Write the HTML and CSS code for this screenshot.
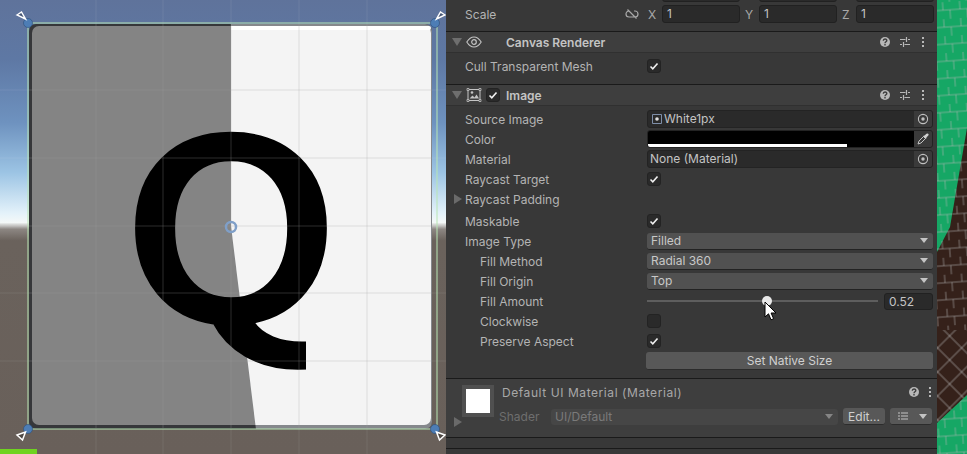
FILE: index.html
```html
<!DOCTYPE html>
<html lang="en">
<head>
    <meta charset="UTF-8">
    <title>Image inspector</title>
    <link rel="stylesheet" href="styles.css">
</head>
<body>

<svg width="0" height="0" class="defs">
    <symbol id="i-check" viewBox="0 0 14 14"><path d="M3.500 7.500l2.300 2.300 4.700-5.300" fill="none" stroke="#f0f0f0" stroke-width="1.600"/></symbol>
    <symbol id="i-help" viewBox="0 0 12 12"><circle cx="6" cy="6" r="5" fill="#b8b8b8"/><path d="M4.300 4.700c0-2.200 3.500-2.200 3.500-.2 0 1.300-1.800 1.300-1.800 2.700" fill="none" stroke="#3e3e3e" stroke-width="1.400"/><rect x="5.300" y="8" width="1.400" height="1.500" fill="#3e3e3e"/></symbol>
    <symbol id="i-sliders" viewBox="0 0 12 12"><path d="M1 3.500h5.500M9 3.500h2M7.500 1v5M1 8.500h2M5.500 8.500h5.500M4.500 6v5" fill="none" stroke="#b8b8b8" stroke-width="1.200"/></symbol>
    <symbol id="i-dots" viewBox="0 0 4 12"><path d="M1 1h2v2H1zM1 5h2v2H1zM1 9h2v2H1z" fill="#b8b8b8"/></symbol>
    <symbol id="i-target" viewBox="0 0 12 12"><circle cx="6" cy="6" r="4.600" fill="none" stroke="#c0c0c0" stroke-width="1.100"/><circle cx="6" cy="6" r="1.700" fill="#c0c0c0"/></symbol>
    <symbol id="i-caret" viewBox="0 0 8 5"><path d="M0 0h8L4 5z" fill="#c4c4c4"/></symbol>
</svg>

<div class="window">
    <div class="scene">
        <svg class="scene-art" width="446" height="454" viewBox="0 0 446 454">
            <defs>
                <linearGradient id="sky" x1="0" y1="0" x2="0" y2="1">
                    <stop offset="0" stop-color="#5f739b"/>
                    <stop offset="0.13" stop-color="#5e78a4"/>
                    <stop offset="0.27" stop-color="#6e92bf"/>
                    <stop offset="0.38" stop-color="#9cc4e4"/>
                    <stop offset="0.47" stop-color="#e4f2fa"/>
                    <stop offset="0.49" stop-color="#f4f8f8"/>
                    <stop offset="0.505" stop-color="#8c8682"/>
                    <stop offset="0.53" stop-color="#6a625c"/>
                    <stop offset="1" stop-color="#69605a"/>
                </linearGradient>
                <clipPath id="wedge"><path d="M231 226V0H446V454H259z"/></clipPath>
                <clipPath id="tail-cut">
                    <rect x="0" y="0" width="446" height="330"/>
                    <rect x="0" y="300" width="306" height="100" rx="6"/>
                </clipPath>
            </defs>
            <rect width="446" height="454" fill="url(#sky)"/>
            <rect y="449" width="37" height="5" fill="#6fd320"/>
            <path d="M96 0V454M163 0V454M231 0V454M299 0V454M367 0V454M0 90H446M0 158H446M0 226H446M0 293H446M0 361H446" stroke="#fff" stroke-opacity=".08"/>

            <rect x="29" y="24" width="403" height="405" rx="7" fill="#36373a"/>
            <rect x="32" y="26" width="399" height="399" rx="7" fill="#848484"/>
            <g clip-path="url(#wedge)">
                <rect x="29" y="24" width="403" height="405" rx="7" fill="#85888c"/>
                <rect x="32" y="26" width="399" height="399" rx="7" fill="#f4f4f4"/>
                <rect x="32" y="26" width="399" height="4" rx="2" fill="#fff"/>
            </g>
            <g clip-path="url(#tail-cut)">
                <text class="q-glyph" transform="translate(231 320) scale(1.02 .87)" text-anchor="middle">Q</text>
            </g>
            <path d="M96 24V428M163 24V428M231 24V428M299 24V428M367 24V428M29 90H432M29 158H432M29 226H432M29 293H432M29 361H432" stroke="#a0a0a0" stroke-opacity=".28"/>

            <rect x="28" y="23" width="409" height="406" fill="none" stroke="#b8e6b4"/>
            <circle cx="231" cy="227" r="5" fill="none" stroke="#7f9fc8" stroke-width="2.500"/>

            <g fill="#4d7db5" stroke="#2c4f78" stroke-width=".6">
                <circle cx="28" cy="23" r="4.500"/><circle cx="435" cy="23" r="4.500"/>
                <circle cx="28" cy="429" r="4.500"/><circle cx="435" cy="429" r="4.500"/>
            </g>
            <g fill="#000" fill-opacity=".25" stroke="#fff" stroke-width="1.500">
                <path d="M17 15l4.500-3 4 7z"/><path d="M445 15l-4.500-3-4 7z"/>
                <path d="M17 435l8.500-3-3 8z"/><path d="M445 435l-8.500-3 3 8z"/>
            </g>
        </svg>
    </div>

    <div class="inspector">
        <div class="clip-row">
            <span class="input"></span><span class="input"></span><span class="input"></span>
        </div>
        <div class="row scale-row">
            <span class="label">Scale</span>
            <div class="xyz">
                <svg class="link-icon" width="14" height="12" viewBox="0 0 14 12"><path d="M4.500 3H4a3 3 0 000 6h6a3 3 0 000-6H9M2.500 1.500l9 9" fill="none" stroke="#a8a8a8" stroke-width="1.200"/></svg>
                <span class="axis">X</span><span class="input">1</span>
                <span class="axis">Y</span><span class="input">1</span>
                <span class="axis">Z</span><span class="input">1</span>
            </div>
        </div>

        <div class="comp-head">
            <span class="fold"></span>
            <svg class="comp-icon" width="16" height="12" viewBox="0 0 16 12"><path d="M.8 6C3 2.500 5.500 1 8 1s5 1.500 7.200 5C13 9.500 10.500 11 8 11S3 9.500.8 6z" fill="none" stroke="#c4c4c4" stroke-width="1.100"/><circle cx="8" cy="6" r="2.300" fill="none" stroke="#c4c4c4" stroke-width="1.200"/></svg>
            <span class="comp-box"></span>
            <span class="comp-title">Canvas Renderer</span>
            <svg class="tool" width="12" height="12"><use href="#i-help"/></svg>
            <svg class="tool" width="12" height="12"><use href="#i-sliders"/></svg>
            <svg class="tool dots" width="4" height="12"><use href="#i-dots"/></svg>
        </div>
        <div class="row first">
            <span class="label">Cull Transparent Mesh</span>
            <span class="check"><svg width="14" height="14"><use href="#i-check"/></svg></span>
        </div>

        <div class="comp-head second">
            <span class="fold"></span>
            <svg class="comp-icon" width="16" height="14" viewBox="0 0 16 14"><path d="M2 1.500h12v11H2z" fill="none" stroke="#c4c4c4"/><path d="M3.500 10.500l3-3 2 2 2-3 2.500 4z" fill="#c4c4c4"/><circle cx="6" cy="4.500" r="1.300" fill="#c4c4c4"/><path d="M1 .5h2v2H1zM13 .5h2v2h-2zM1 11.500h2v2H1zM13 11.500h2v2h-2z" fill="#383838" stroke="#c4c4c4" stroke-width=".8"/></svg>
            <span class="check comp-box"><svg width="14" height="14"><use href="#i-check"/></svg></span>
            <span class="comp-title">Image</span>
            <svg class="tool" width="12" height="12"><use href="#i-help"/></svg>
            <svg class="tool" width="12" height="12"><use href="#i-sliders"/></svg>
            <svg class="tool dots" width="4" height="12"><use href="#i-dots"/></svg>
        </div>
        <div class="row first">
            <span class="label">Source Image</span>
            <div class="field">
                <svg class="thumb" width="12" height="12" viewBox="0 0 12 12"><path d="M1.500 1.500h9v9h-9z" fill="none" stroke="#7e8ea8"/><circle cx="6" cy="6" r="1.800" fill="#e0e0e0"/></svg>
                <span class="field-text">White1px</span>
                <span class="picker"><svg width="12" height="12"><use href="#i-target"/></svg></span>
            </div>
        </div>
        <div class="row">
            <span class="label">Color</span>
            <div class="color-field">
                <div class="swatch"><div class="alpha" style="width: 74.900%"></div></div>
                <span class="picker"><svg width="12" height="12" viewBox="0 0 12 12"><path d="M1 11l1-3 4.500-4.500 2 2L4 10z" fill="none" stroke="#c4c4c4"/><path d="M6 3l1.500-.5L9.500.8a1 1 0 011.700 1.700L9.500 4.500 9 6z" fill="#d0d0d0"/></svg></span>
            </div>
        </div>
        <div class="row">
            <span class="label">Material</span>
            <div class="field">
                <span class="field-text plain">None (Material)</span>
                <span class="picker"><svg width="12" height="12"><use href="#i-target"/></svg></span>
            </div>
        </div>
        <div class="row">
            <span class="label">Raycast Target</span>
            <span class="check"><svg width="14" height="14"><use href="#i-check"/></svg></span>
        </div>
        <div class="row foldout-row">
            <span class="label"><span class="fold-side"></span>Raycast Padding</span>
        </div>
        <div class="row after-fold">
            <span class="label">Maskable</span>
            <span class="check"><svg width="14" height="14"><use href="#i-check"/></svg></span>
        </div>
        <div class="row">
            <span class="label">Image Type</span>
            <div class="select">Filled<svg width="8" height="5"><use href="#i-caret"/></svg></div>
        </div>
        <div class="row sub">
            <span class="label">Fill Method</span>
            <div class="select">Radial 360<svg width="8" height="5"><use href="#i-caret"/></svg></div>
        </div>
        <div class="row sub">
            <span class="label">Fill Origin</span>
            <div class="select">Top<svg width="8" height="5"><use href="#i-caret"/></svg></div>
        </div>
        <div class="row sub">
            <span class="label">Fill Amount</span>
            <div class="slider">
                <div class="track">
                    <span class="knob" style="left: 52%"></span>
                    <svg class="cursor" width="13" height="20" viewBox="0 0 13 20"><path d="M1 1v15l3.500-3.200 2.500 6 2.600-1.100-2.500-5.700H12z" fill="#fff" stroke="#000"/></svg>
                </div>
                <span class="input amount">0.52</span>
            </div>
        </div>
        <div class="row sub">
            <span class="label">Clockwise</span>
            <span class="check"></span>
        </div>
        <div class="row sub">
            <span class="label">Preserve Aspect</span>
            <span class="check"><svg width="14" height="14"><use href="#i-check"/></svg></span>
        </div>
        <div class="row native-row">
            <span></span>
            <div class="btn native">Set Native Size</div>
        </div>

        <div class="mat">
            <span class="fold-side mat-fold"></span>
            <div class="mat-swatch"><span></span></div>
            <div class="mat-body">
                <div class="mat-title">
                    <span class="mat-name">Default UI Material (Material)</span>
                    <svg class="tool" width="12" height="12"><use href="#i-help"/></svg>
                    <svg class="tool dots" width="4" height="12"><use href="#i-dots"/></svg>
                </div>
                <div class="mat-shader">
                    <span class="shader-label">Shader</span>
                    <div class="select shader-select">UI/Default<svg width="8" height="5"><use href="#i-caret"/></svg></div>
                    <div class="btn edit">Edit...</div>
                    <div class="btn list">
                        <svg width="10" height="8" viewBox="0 0 10 8"><path d="M3 1h7M3 4h7M3 7h7M0 1h2M0 4h2M0 7h2" stroke="#c4c4c4"/></svg>
                        <svg width="8" height="5"><use href="#i-caret"/></svg>
                    </div>
                </div>
            </div>
        </div>
        <div class="end-strip"></div>
    </div>

    <div class="side">
        <svg width="30" height="454" viewBox="937 0 30 454">
            <defs>
                <pattern id="mesh" width="17" height="17" patternUnits="userSpaceOnUse" patternTransform="rotate(-4)">
                    <path d="M0 8H17M5 0V8M12 8V17" stroke="#b4b4b4" stroke-opacity=".55" fill="none"/>
                </pattern>
                <pattern id="mesh-cross" width="17" height="17" patternUnits="userSpaceOnUse" patternTransform="rotate(45)">
                    <path d="M0 8H17M8 0V17" stroke="#b4b4b4" stroke-opacity=".6" fill="none"/>
                </pattern>
            </defs>
            <rect x="937" width="30" height="454" fill="#35211a"/>
            <rect x="937" y="230" width="30" height="100" fill="url(#mesh)"/>
            <rect x="937" y="330" width="30" height="100" fill="url(#mesh-cross)"/>
            <path d="M937 0H967V128L950 227 937 252z" fill="#16a765"/>
            <path d="M937 423L967 395V454H937z" fill="#16a765"/>
            <path d="M937 0H967V128L950 227 937 252z" fill="url(#mesh)"/>
            <path d="M937 423L967 395V454H937z" fill="url(#mesh)"/>
            <path d="M963 150L967 128V230H950z" fill="url(#mesh)"/>
        </svg>
    </div>
</div>

</body>
</html>
```

FILE: styles.css
```css
html, body {
    margin: 0;
    padding: 0;
    overflow: hidden;
}
body {
    font-family: Inter, "Liberation Sans", sans-serif;
    font-size: 12px;
    color: #c4c4c4;
    background: #383838;
}
.defs {
    position: absolute;
}
.window {
    display: flex;
    width: 967px;
    height: 454px;
    overflow: hidden;
}
.scene {
    flex: 0 0 446px;
}
.scene-art, .side svg {
    display: block;
}
.q-glyph {
    font-family: "Noto Sans CJK JP", sans-serif;
    font-weight: 500;
    font-size: 285px;
    fill: #000;
    stroke: #000;
    stroke-width: 5px;
    stroke-linejoin: round;
}

/* inspector */
.inspector {
    flex: 0 0 491px;
    background: #383838;
    overflow: hidden;
}
.clip-row {
    display: flex;
    height: 4px;
    padding-left: 216px;
    padding-right: 4px;
    gap: 19px;
    overflow: hidden;
    align-items: flex-end;
}
.clip-row .input {
    flex: 0 0 78px;
    margin-bottom: 2px;
}
.row {
    display: grid;
    grid-template-columns: 182px 1fr;
    align-items: center;
    height: 20px;
    padding: 0 4px 0 19px;
}
.row.first {
    margin-top: 3px;
}
.row.sub .label {
    padding-left: 15px;
}
.row.after-fold {
    margin-top: 2px;
}
.label {
    color: #b4b4b4;
    white-space: nowrap;
}
.foldout-row .label {
    position: relative;
}
.fold-side {
    position: absolute;
    left: -11px;
    top: 2px;
    border-left: 8px solid #6a6a6a;
    border-top: 5px solid transparent;
    border-bottom: 5px solid transparent;
}
.scale-row {
    margin-bottom: 7px;
}
.xyz {
    display: flex;
    align-items: center;
    margin-left: -22px;
}
.link-icon {
    margin-right: 9px;
}
.axis {
    width: 14px;
    margin-left: 5px;
    color: #a8a8a8;
}
.axis:first-of-type {
    margin-left: 0;
}
.input {
    display: block;
    box-sizing: border-box;
    flex: 0 0 78px;
    height: 18px;
    line-height: 16px;
    padding: 0 4px;
    background: #2a2a2a;
    border: 1px solid #212121;
    border-radius: 3px;
    color: #c4c4c4;
}

/* component header */
.comp-head {
    display: flex;
    align-items: center;
    box-sizing: content-box;
    height: 20px;
    background: #3e3e3e;
    border-top: 1px solid #1a1a1a;
    border-bottom: 1px solid #303030;
}
.comp-head.second {
    margin-top: 8px;
}
.fold {
    margin-left: 6px;
    width: 0;
    border-top: 8px solid #6e6e6e;
    border-left: 5px solid transparent;
    border-right: 5px solid transparent;
}
.comp-icon {
    margin-left: 4px;
}
.comp-box {
    flex: 0 0 14px;
    margin-left: 4px;
    margin-right: 0;
}
.comp-title {
    flex: 1;
    margin-left: 6px;
    font-weight: 600;
    color: #c4c4c4;
}
.tool {
    margin-right: 8px;
}
.tool.dots {
    margin-left: 2px;
    margin-right: 12px;
}

/* values */
.check {
    display: block;
    box-sizing: border-box;
    width: 14px;
    height: 14px;
    background: #2a2a2a;
    border: 1px solid #232323;
    border-radius: 3px;
}
.check svg {
    display: block;
    margin: -1px;
}
.field, .color-field {
    display: flex;
    height: 18px;
    box-sizing: border-box;
    align-items: stretch;
    background: #2a2a2a;
    border: 1px solid #232323;
    border-radius: 3px;
    overflow: hidden;
}
.field-text {
    flex: 1;
    line-height: 16px;
    color: #c4c4c4;
}
.field-text.plain {
    padding-left: 2px;
}
.thumb {
    margin: 2px 1px 0 3px;
}
.picker {
    display: flex;
    align-items: center;
    justify-content: center;
    flex: 0 0 18px;
    background: #3a3a3a;
}
.swatch {
    flex: 1;
    display: flex;
    align-items: flex-end;
    background: #000;
}
.alpha {
    height: 3px;
    background: #fff;
}
.select {
    display: flex;
    align-items: center;
    justify-content: space-between;
    box-sizing: border-box;
    height: 17px;
    padding: 0 5px 0 4px;
    background: #515151;
    border-bottom: 1px solid #232323;
    border-radius: 3px;
    color: #c8c8c8;
}
.slider {
    display: flex;
    align-items: center;
    gap: 6px;
}
.track {
    position: relative;
    flex: 1;
    height: 2px;
    background: #5e5e5e;
}
.knob {
    position: absolute;
    top: -4px;
    width: 10px;
    height: 10px;
    margin-left: -5px;
    border-radius: 50%;
    background: #e8e8e8;
}
.cursor {
    position: absolute;
    left: 51%;
    top: 1px;
    margin-left: -1px;
}
.input.amount {
    flex: 0 0 49px;
    height: 17px;
}
.btn {
    box-sizing: border-box;
    height: 18px;
    line-height: 17px;
    text-align: center;
    background: #585858;
    border-bottom: 1px solid #2c2c2c;
    border-radius: 3px;
    color: #d0d0d0;
}
.native {
    margin-left: -1px;
}
.native-row {
    margin-bottom: 7px;
}

/* material block */
.mat {
    position: relative;
    display: flex;
    height: 58px;
    box-sizing: content-box;
    background: #3e3e3e;
    border-top: 1px solid #1a1a1a;
    border-bottom: 1px solid #1a1a1a;
}
.mat-fold {
    left: 8px;
    top: 38px;
}
.mat-swatch {
    display: flex;
    align-self: flex-start;
    margin: 6px 0 0 16px;
    padding: 4px;
    background: #505050;
}
.mat-swatch span {
    width: 24px;
    height: 24px;
    background: #fff;
}
.mat-body {
    flex: 1;
    padding: 5px 4px 0 5px;
}
.mat-title {
    display: flex;
    align-items: center;
    height: 16px;
}
.mat-name {
    flex: 1;
    padding-left: 3px;
    color: #a8a8a8;
    letter-spacing: .57px;
}
.mat-title .tool {
    margin-right: 8px;
}
.mat-title .tool.dots {
    margin: 0 1px 0 0;
}
.mat-shader {
    display: flex;
    align-items: center;
    height: 17px;
    margin-top: 8px;
}
.shader-label {
    width: 52px;
    color: #6e6e6e;
}
.shader-select {
    flex: 0 0 287px;
    height: 16px;
    border-bottom: 0;
    background: #464646;
    color: #7a7a7a;
}
.shader-select svg {
    opacity: .5;
}
.edit {
    flex: 0 0 42px;
    margin-left: 5px;
    height: 17px;
}
.list {
    display: flex;
    align-items: center;
    justify-content: space-between;
    flex: 0 0 42px;
    height: 17px;
    margin-left: 5px;
    padding: 0 5px 0 8px;
}
.end-strip {
    height: 10px;
    border-bottom: 1px solid #1a1a1a;
}
.side {
    flex: 0 0 30px;
}
```
